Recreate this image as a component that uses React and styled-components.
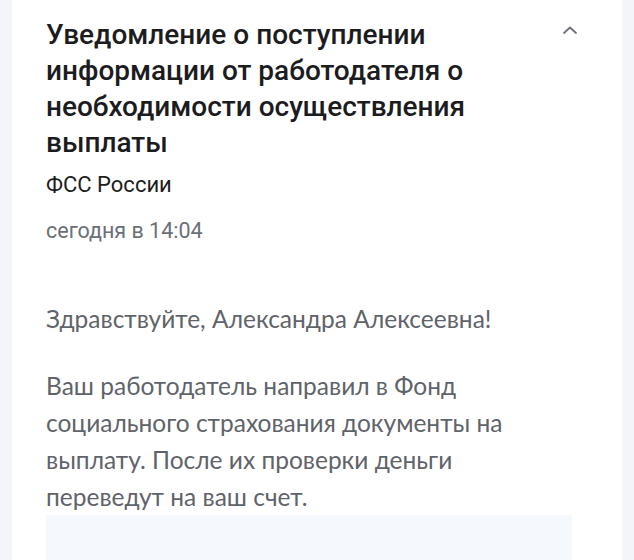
import React from "react";
import styled, { createGlobalStyle } from "styled-components";

const GlobalStyle = createGlobalStyle`
  body {
    margin: 0;
    background: #f4f5f8;
  }
`;

const Page = styled.div`
  height: 560px;
  overflow: hidden;
  padding-left: 12px;
`;

const Card = styled.div`
  width: 610px;
  min-height: 560px;
  background: #fff;
  box-sizing: border-box;
  padding: 17px 50px 0 34px;
`;

const Header = styled.div`
  display: flex;
  justify-content: space-between;
  align-items: flex-start;
`;

const Title = styled.h1`
  margin: 0;
  width: 470px;
  font-family: Roboto, "Noto Sans", sans-serif;
  font-weight: 500;
  font-size: 28px;
  line-height: 36px;
  color: #1c1c1e;
`;

const Toggle = styled.button`
  border: 0;
  background: none;
  padding: 0;
  margin: 6px -8px 0 0;
  color: #6e7178;
  cursor: pointer;
  display: flex;
`;

const Sender = styled.div`
  margin-top: 12px;
  font-family: Roboto, "Noto Sans", sans-serif;
  font-size: 22px;
  line-height: 24px;
  color: #1c1c1e;
`;

const Time = styled.div`
  margin-top: 22px;
  font-family: Roboto, "Noto Sans", sans-serif;
  font-size: 21.5px;
  line-height: 24px;
  color: #6b6f77;
`;

const Body = styled.div`
  margin-top: 57px;
  font-family: Lato, "Open Sans", sans-serif;
  font-size: 24.5px;
  line-height: 37px;
  color: #5f636a;
`;

const Paragraph = styled.p`
  margin: 0 0 ${(p) => p.gap || 0}px;
`;

const InfoBox = styled.div`
  height: 60px;
  background: #f5f8fc;
`;

const Chevron = () => (
  <svg width="20" height="14" viewBox="0 0 20 14" fill="none">
    <path
      d="M4 10L10 4.5L16 10"
      stroke="currentColor"
      strokeWidth="1.8"
      strokeLinecap="round"
      strokeLinejoin="round"
    />
  </svg>
);

const App = () => {
  return (
    <Page>
      <GlobalStyle />
      <Card>
        <Header>
          <Title>
            Уведомление о поступлении информации от работодателя о
            необходимости осуществления выплаты
          </Title>
          <Toggle aria-label="Свернуть">
            <Chevron />
          </Toggle>
        </Header>
        <Sender>ФСС России</Sender>
        <Time>сегодня в 14:04</Time>
        <Body>
          <Paragraph gap={30}>Здравствуйте, Александра Алексеевна!</Paragraph>
          <Paragraph>
            Ваш работодатель направил в Фонд социального страхования
            документы на выплату. После их проверки деньги переведут на ваш
            счет.
          </Paragraph>
        </Body>
        <InfoBox />
      </Card>
    </Page>
  );
};

export default App;
